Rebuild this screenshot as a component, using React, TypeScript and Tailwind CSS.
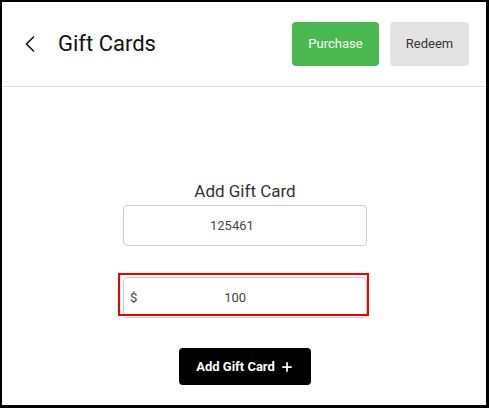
import React from 'react';
import { Plus } from 'lucide-react';

export default function App() {
  return (
    <div
      className="w-[489px] h-[408px] bg-white border-black border-t-2 border-l-2 border-r-[3px] border-b-[3px] flex flex-col"
      style={{ fontFamily: 'Roboto, "Liberation Sans", sans-serif' }}
    >
      <header className="h-[85px] shrink-0 flex items-center border-b border-[#dedede] pl-[22px] pr-[17px]">
        <button className="w-[12px] h-[20px] flex items-center justify-center text-[#111]">
          <svg width="12" height="18" viewBox="0 0 12 18" fill="none">
            <path d="M10 1.5 L2.5 9 L10 16.5" stroke="currentColor" strokeWidth="1.6" />
          </svg>
        </button>
        <h1 className="ml-[22px] text-[22px] leading-none text-[#111] flex-1">Gift Cards</h1>
        <button className="w-[87px] h-[44px] rounded bg-[#49b84e] text-white text-[13px]">Purchase</button>
        <button className="ml-[11px] w-[79px] h-[44px] rounded bg-[#e3e3e3] text-[#333] text-[13px]">Redeem</button>
      </header>

      <main className="flex flex-col items-center pt-[94px] pl-[2px]">
        <h2 className="text-[17px] leading-[20px] text-[#333]">Add Gift Card</h2>
        <div className="mt-[4px] w-[244px] h-[41px] rounded border border-[#cccccc] flex items-center pl-[86px] text-[13px] text-[#444]">
          125461
        </div>
        <div className="relative mt-[31px] w-[244px] h-[41px]">
          <div className="w-full h-full rounded border border-[#cccccc] flex items-center px-[6px] text-[13px] text-[#444]">
            <span>$</span>
            <span className="flex-1 text-center pr-[27px]">100</span>
          </div>
          <div className="absolute left-[-5px] top-[-4px] w-[251px] h-[43px] border-2 border-[#f00000]" />
        </div>
        <button className="mt-[30px] w-[132px] h-[37px] rounded bg-black text-white text-[13px] font-bold flex items-center justify-center gap-[5px]">
          Add Gift Card
          <Plus size={14} strokeWidth={3} />
        </button>
      </main>
    </div>
  );
}
